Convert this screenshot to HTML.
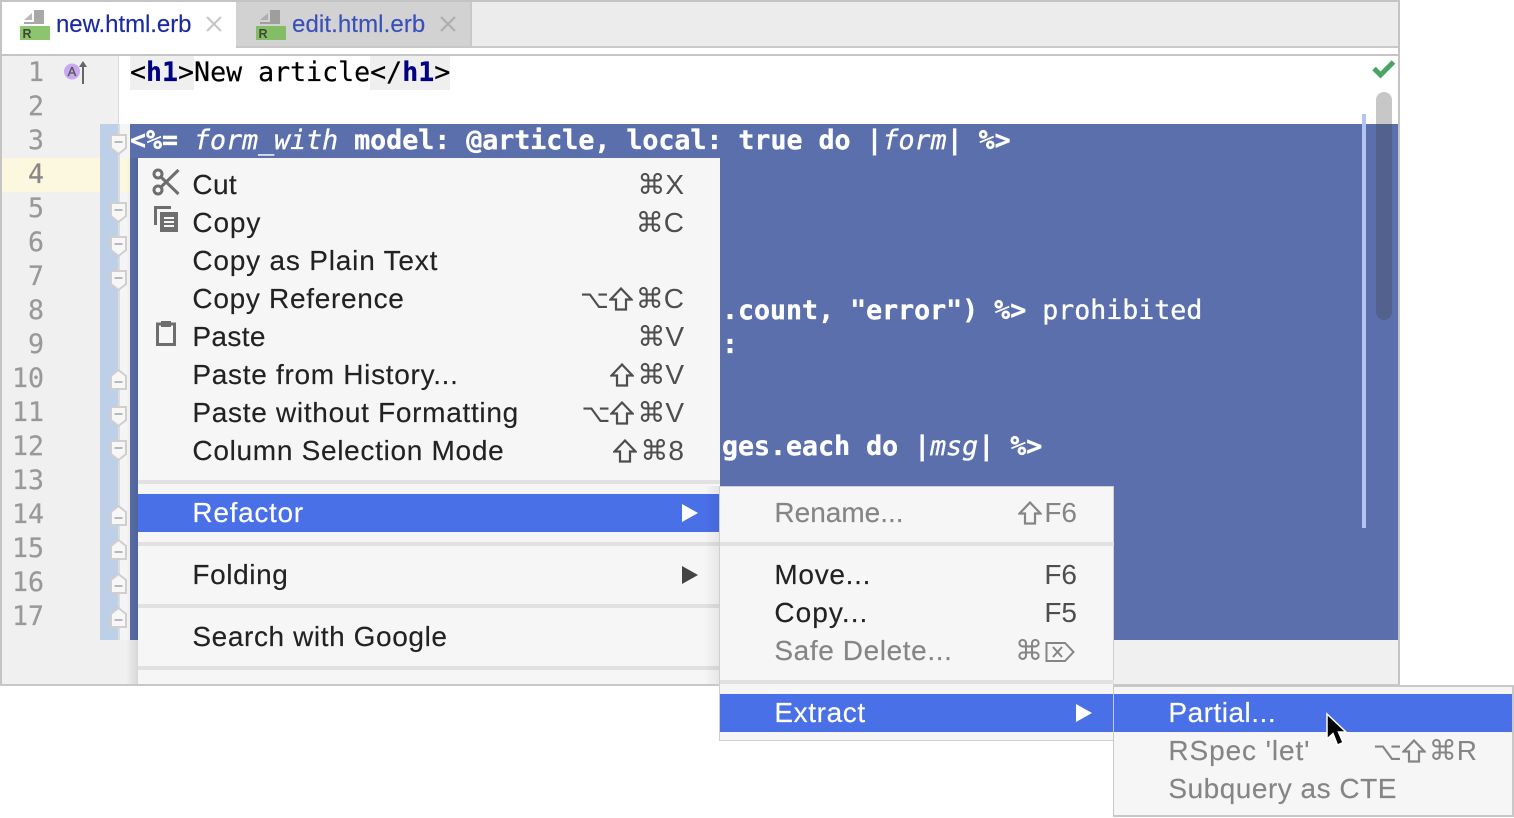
<!DOCTYPE html>
<html><head><meta charset="utf-8"><style>
html,body{margin:0;padding:0;background:#fff}
#p{position:relative;width:1514px;height:818px;overflow:hidden;background:#fff}
#p div,#p svg{position:absolute}
.t{font-family:"Liberation Sans",sans-serif;font-size:28px;line-height:38px;height:38px;white-space:pre;color:#222;letter-spacing:.7px;-webkit-text-stroke:.15px currentColor;margin:1px 0 0 -.6px}
.s{font-family:"Liberation Sans","DejaVu Sans",sans-serif;font-size:28px;line-height:38px;height:38px;white-space:pre;color:#4e4e4e;text-align:right;width:200px;margin-top:1px}
.s span{font-size:25px}
#p .s svg{position:static;vertical-align:-3px;margin-right:3px}
.d{color:#858585}
.c{font-family:"DejaVu Sans Mono",monospace;font-size:26.6px;line-height:34px;height:34px;white-space:pre;color:#000;-webkit-text-stroke:.2px currentColor}
.w{color:#fff;font-weight:bold;-webkit-text-stroke:.35px #fff}
.w i{font-weight:normal}
.w b{font-weight:normal}
.n{font-family:"DejaVu Sans Mono",monospace;font-size:26.6px;line-height:34px;height:34px;color:#999;width:32px;text-align:right;left:12px;-webkit-text-stroke:.2px currentColor}
.sep{background:#e1e1e1;height:4px}
.hl{background:#4a70e8}
b.k{color:#000080}
.f{left:110px;width:17px;height:21px}
</style></head><body><div id="p">
<svg width="0" height="0" style="left:0;top:0"><defs>
<symbol id="sh" viewBox="0 0 24 24"><path d="M12 1.500L22.500 12.500H17V22.500H7V12.500H1.500Z" fill="none" stroke="currentColor" stroke-width="2.200" stroke-linejoin="miter"/></symbol>
<symbol id="fd" viewBox="0 0 17 21"><path d="M1 1H16V14L8.500 20L1 14Z" fill="#f7f7f7" stroke="#cfcfcf" stroke-width="2"/><path d="M4.500 8H12.500" stroke="#b8b8b8" stroke-width="2"/></symbol>
<symbol id="fu" viewBox="0 0 17 21"><path d="M1 20H16V7L8.500 1L1 7Z" fill="#f7f7f7" stroke="#cfcfcf" stroke-width="2"/><path d="M4.500 13H12.500" stroke="#b8b8b8" stroke-width="2"/></symbol>
</defs></svg>
<!-- frame -->
<div style="left:0;top:0;width:1400px;height:686px;background:#fff"></div>
<div style="left:0;top:0;width:2px;height:686px;background:#c4c4c4"></div>
<div style="left:1398px;top:0;width:2px;height:686px;background:#c4c4c4"></div>
<div style="left:0;top:0;width:1400px;height:2px;background:#c4c4c4"></div>
<div style="left:2px;top:2px;width:1396px;height:44px;background:#ececec"></div>
<div style="left:2px;top:46px;width:1396px;height:6px;background:#fff"></div>
<div style="left:2px;top:54px;width:1396px;height:2px;background:#c4c4c4"></div>
<div style="left:2px;top:2px;width:234px;height:52px;background:#fff"></div>
<div style="left:236px;top:2px;width:236px;height:46px;background:#d2d2d2;border-right:2px solid #c8c8c8;box-sizing:border-box"></div>
<div style="left:236px;top:46px;width:1162px;height:2px;background:#c8c8c8"></div>
<!-- tab icons -->
<svg style="left:20px;top:10px" width="30" height="30" viewBox="0 0 30 30"><path d="M4 10L12 3V10Z" fill="#b8b8b8"/><path d="M14 0H24V14H4V12H14Z" fill="#a8a8a8"/><rect y="16" width="30" height="14" fill="#8cc56e"/><text x="2.500" y="28" font-family="Liberation Sans" font-weight="bold" font-size="12.500" fill="#3b4a35">R</text></svg>
<svg style="left:256px;top:10px" width="30" height="30" viewBox="0 0 30 30"><path d="M4 10L12 3V10Z" fill="#aeaeae"/><path d="M14 0H24V14H4V12H14Z" fill="#9e9e9e"/><rect y="16" width="30" height="14" fill="#84bd66"/><text x="2.500" y="28" font-family="Liberation Sans" font-weight="bold" font-size="12.500" fill="#3b4a35">R</text></svg>
<div class="t" style="left:56px;top:6px;margin:0;color:#1a2aa0;font-size:24px;letter-spacing:-.05px">new.html.erb</div>
<div class="t" style="left:292px;top:6px;margin:0;color:#3a50b8;font-size:24px;letter-spacing:.1px">edit.html.erb</div>
<svg style="left:205px;top:15px" width="18" height="18"><path d="M2 2L16 16M16 2L2 16" stroke="#c4c4c4" stroke-width="2"/></svg>
<svg style="left:439px;top:15px" width="18" height="18"><path d="M2 2L16 16M16 2L2 16" stroke="#adadad" stroke-width="2"/></svg>
<!-- gutter -->
<div style="left:2px;top:56px;width:116px;height:584px;background:#f0f0f0"></div>
<div style="left:118px;top:56px;width:1px;height:68px;background:#dcdcdc"></div>
<div style="left:2px;top:158px;width:98px;height:34px;background:#fcf8e0"></div>
<div style="left:100px;top:124px;width:18px;height:516px;background:#bdd0e7"></div>
<div style="left:118px;top:124px;width:12px;height:516px;background:#f5f5f5"></div>
<div style="left:118px;top:158px;width:12px;height:34px;background:#fcf8e0"></div>
<div style="left:118px;top:124px;width:2px;height:516px;background:#dcdcdc"></div>
<div class="n" style="top:56px">1</div><div class="n" style="top:90px">2</div><div class="n" style="top:124px">3</div><div class="n" style="top:158px;color:#888">4</div><div class="n" style="top:192px">5</div><div class="n" style="top:226px">6</div><div class="n" style="top:260px">7</div><div class="n" style="top:294px">8</div><div class="n" style="top:328px">9</div><div class="n" style="top:362px">10</div><div class="n" style="top:396px">11</div><div class="n" style="top:430px">12</div><div class="n" style="top:464px">13</div><div class="n" style="top:498px">14</div><div class="n" style="top:532px">15</div><div class="n" style="top:566px">16</div><div class="n" style="top:600px">17</div>
<svg style="left:64px;top:60px" width="26" height="24"><circle cx="8" cy="11.500" r="8" fill="#c9a9f2"/><text x="8" y="16" text-anchor="middle" font-family="Liberation Sans" font-size="13" fill="#555" stroke="#555" stroke-width=".3">A</text><path d="M19 24V4" stroke="#666" stroke-width="2"/><path d="M15 7L19 1L23 7Z" fill="#666"/></svg>
<!-- fold marks -->
<svg class="f" style="top:134px"><use href="#fd"/></svg>
<svg class="f" style="top:202px"><use href="#fd"/></svg>
<svg class="f" style="top:236px"><use href="#fd"/></svg>
<svg class="f" style="top:270px"><use href="#fd"/></svg>
<svg class="f" style="top:369px"><use href="#fu"/></svg>
<svg class="f" style="top:406px"><use href="#fd"/></svg>
<svg class="f" style="top:440px"><use href="#fd"/></svg>
<svg class="f" style="top:505px"><use href="#fu"/></svg>
<svg class="f" style="top:539px"><use href="#fu"/></svg>
<svg class="f" style="top:573px"><use href="#fu"/></svg>
<svg class="f" style="top:607px"><use href="#fu"/></svg>
<!-- editor -->
<div style="left:130px;top:56px;width:64px;height:34px;background:#efefef"></div>
<div style="left:370px;top:56px;width:80px;height:34px;background:#efefef"></div>
<div class="c" style="left:130px;top:56px">&lt;<b class="k">h1</b>&gt;New article&lt;/<b class="k">h1</b>&gt;</div>
<div style="left:130px;top:124px;width:1268px;height:516px;background:#5a6fab"></div>
<div class="c w" style="left:130px;top:124px">&lt;%= <i>form_with</i> model: @article, local: true do |<i>form</i>| %&gt;</div>
<div class="c w" style="left:722px;top:294px">.count, "error") %&gt; <b>prohibited</b></div>
<div class="c w" style="left:722px;top:328px">:</div>
<div class="c w" style="left:722px;top:430px">ges.each do |<i>msg</i>| %&gt;</div>
<div style="left:1362px;top:114px;width:4px;height:414px;background:#b4c3f0"></div>
<div style="left:1376px;top:92px;width:16px;height:228px;border-radius:8px;background:rgba(70,70,70,.3)"></div>
<svg style="left:1372px;top:59px" width="24" height="20"><path d="M2 9.500L8.500 16L21.500 3" fill="none" stroke="#4aa564" stroke-width="5"/></svg>
<!-- bottom -->
<div style="left:2px;top:640px;width:1396px;height:44px;background:#f0f0f0"></div>
<div style="left:0;top:684px;width:1400px;height:2px;background:#c8c8c8"></div>
<!-- main menu -->
<div style="left:126px;top:158px;width:12px;height:526px;background:linear-gradient(90deg,rgba(0,0,0,0),rgba(0,0,0,.1))"></div>
<div style="left:138px;top:158px;width:582px;height:526px;background:#f6f6f6"></div>
<div class="t" style="left:193px;top:165px;letter-spacing:.35px">Cut</div><div class="s" style="left:484px;top:165px">⌘X</div>
<div class="t" style="left:193px;top:203px;letter-spacing:.85px">Copy</div><div class="s" style="left:484px;top:203px">⌘C</div>
<div class="t" style="left:193px;top:241px;letter-spacing:.8px">Copy as Plain Text</div>
<div class="t" style="left:193px;top:279px;letter-spacing:.7px">Copy Reference</div><div class="s" style="left:484px;top:279px"><span>⌥</span><svg width="24" height="24"><use href="#sh"/></svg>⌘C</div>
<div class="t" style="left:193px;top:317px;letter-spacing:.35px">Paste</div><div class="s" style="left:484px;top:317px">⌘V</div>
<div class="t" style="left:193px;top:355px">Paste from History...</div><div class="s" style="left:484px;top:355px"><svg width="24" height="24"><use href="#sh"/></svg>⌘V</div>
<div class="t" style="left:193px;top:393px">Paste without Formatting</div><div class="s" style="left:484px;top:393px"><span>⌥</span><svg width="24" height="24"><use href="#sh"/></svg>⌘V</div>
<div class="t" style="left:193px;top:431px">Column Selection Mode</div><div class="s" style="left:484px;top:431px"><svg width="24" height="24"><use href="#sh"/></svg>⌘8</div>
<svg style="left:152px;top:168px" width="28" height="28" viewBox="0 0 28 28"><g fill="none" stroke="#6e6e6e" stroke-width="3"><circle cx="6" cy="6" r="4"/><circle cx="6" cy="22" r="4"/><path d="M9 9L26.500 26M9 19L26.500 2"/></g></svg>
<svg style="left:154px;top:206px" width="25" height="27" viewBox="0 0 25 27"><path d="M0 0H17V3H3V19H0Z" fill="#6e6e6e"/><path d="M6 6H24V26H6Z" fill="#6e6e6e"/><path d="M10 12H20M10 16H20M10 20H20" stroke="#f6f6f6" stroke-width="2"/></svg>
<svg style="left:156px;top:320px" width="20" height="26" viewBox="0 0 20 26"><path d="M1.500 4H18.500V24.500H1.500Z" fill="none" stroke="#6e6e6e" stroke-width="3"/><rect x="5" y="1" width="10" height="6" fill="#6e6e6e"/></svg>
<div class="sep" style="left:138px;top:480px;width:582px"></div>
<div class="hl" style="left:138px;top:494px;width:582px;height:38px"></div>
<div class="t" style="left:193px;top:493px;color:#fff">Refactor</div>
<svg style="left:682px;top:504px" width="16" height="18"><path d="M0 0L16 9L0 18Z" fill="#fff"/></svg>
<div class="sep" style="left:138px;top:542px;width:582px"></div>
<div class="t" style="left:193px;top:555px;letter-spacing:.6px">Folding</div>
<svg style="left:682px;top:566px" width="16" height="18"><path d="M0 0L16 9L0 18Z" fill="#444"/></svg>
<div class="sep" style="left:138px;top:604px;width:582px"></div>
<div class="t" style="left:193px;top:617px;letter-spacing:.6px">Search with Google</div>
<div class="sep" style="left:138px;top:666px;width:582px"></div>
<!-- sub menu -->
<div style="left:704px;top:486px;width:16px;height:198px;background:linear-gradient(90deg,rgba(0,0,0,0),rgba(0,0,0,.07))"></div>
<div style="left:719px;top:486px;width:395px;height:255px;background:#f6f6f6;border:1px solid #cfcfcf;box-sizing:border-box"></div>
<div class="t d" style="left:775px;top:493px;letter-spacing:0">Rename...</div><div class="s d" style="left:877px;top:493px"><svg width="24" height="24" style="margin-right:2px"><use href="#sh"/></svg>F6</div>
<div class="sep" style="left:720px;top:542px;width:394px"></div>
<div class="t" style="left:775px;top:555px">Move...</div><div class="s" style="left:877px;top:555px">F6</div>
<div class="t" style="left:775px;top:593px;letter-spacing:1.05px">Copy...</div><div class="s" style="left:877px;top:593px">F5</div>
<div class="t d" style="left:775px;top:631px;letter-spacing:.6px">Safe Delete...</div><div class="s d" style="left:875px;top:631px">⌘<svg width="30" height="22" viewBox="0 0 30 22" style="margin:0 0 0 2px;vertical-align:-3px"><path d="M1.500 2H20L28.500 11L20 20H1.500Z" fill="none" stroke="currentColor" stroke-width="2"/><path d="M8 6L17 16M17 6L8 16" stroke="currentColor" stroke-width="2"/></svg></div>
<div class="sep" style="left:720px;top:680px;width:394px"></div>
<div class="hl" style="left:720px;top:694px;width:394px;height:38px"></div>
<div class="t" style="left:775px;top:693px;color:#fff;letter-spacing:.6px">Extract</div>
<svg style="left:1076px;top:704px" width="16" height="18"><path d="M0 0L16 9L0 18Z" fill="#fff"/></svg>
<!-- third menu -->
<div style="left:1113px;top:685px;width:401px;height:132px;background:#f6f6f6;border:2px solid #c8c8c8;border-left-width:1px;box-sizing:border-box"></div>
<div class="hl" style="left:1114px;top:694px;width:398px;height:38px"></div>
<div class="t" style="left:1169px;top:693px;color:#fff;letter-spacing:.5px">Partial...</div>
<div class="t d" style="left:1169px;top:731px;letter-spacing:.9px">RSpec 'let'</div><div class="s d" style="left:1277px;top:731px"><span>⌥</span><svg width="24" height="24"><use href="#sh"/></svg>⌘R</div>
<div class="t d" style="left:1169px;top:769px;letter-spacing:.5px">Subquery as CTE</div>
<!-- cursor -->
<svg style="left:1324px;top:712px" width="26" height="38" viewBox="0 0 26 38"><path d="M3 2V27L9 21.500L13.500 33L19 30.500L14.500 20H22Z" fill="#000" stroke="#fff" stroke-width="1.500"/></svg>
</div></body></html>
